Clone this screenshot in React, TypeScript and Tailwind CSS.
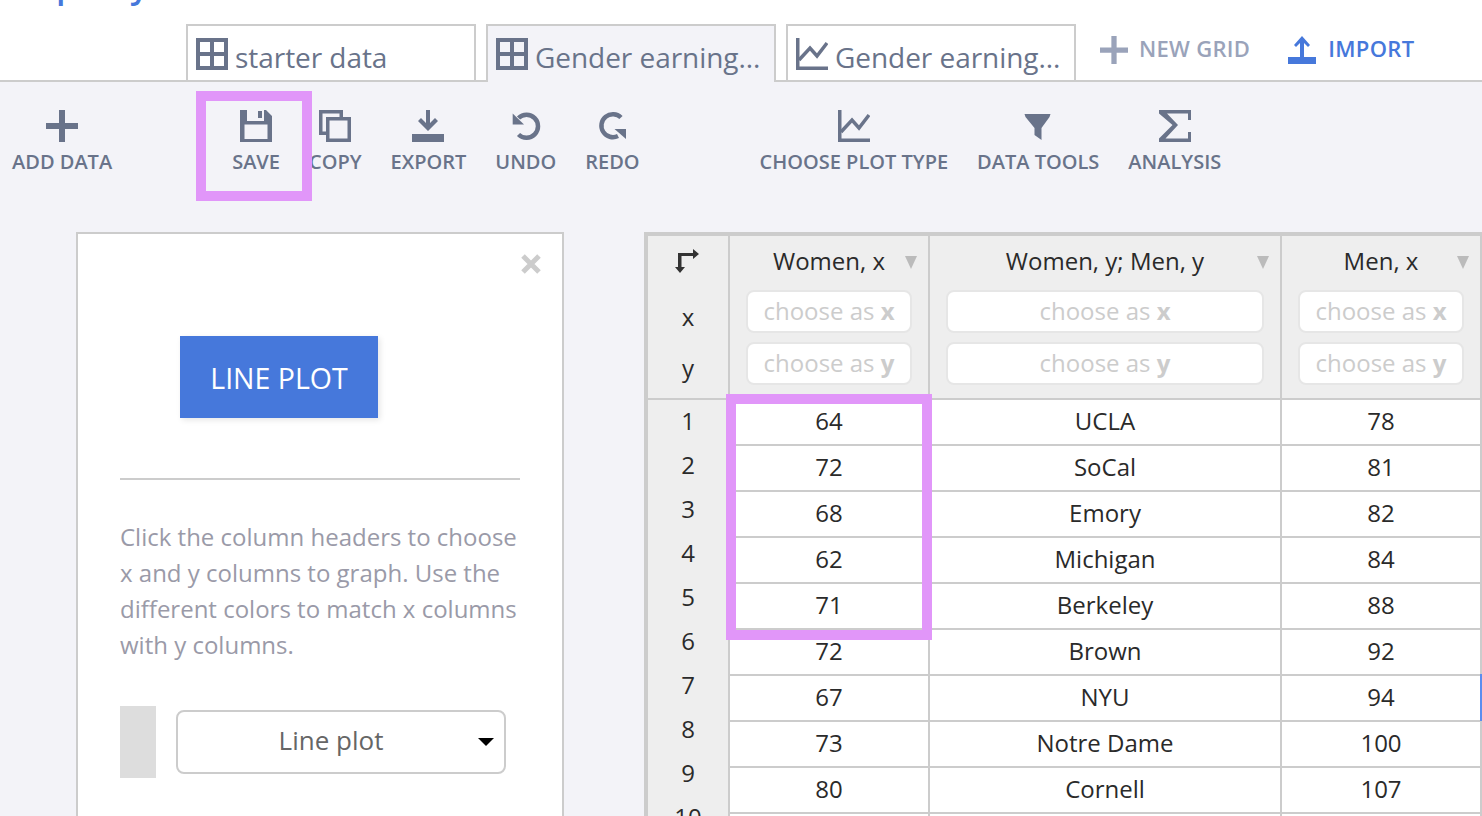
const TEXT = "text-[#69738a]";

function Grid({ c = "#69738a" }: { c?: string }) {
  return (
    <svg width="32" height="32" viewBox="0 0 32 32" className="shrink-0">
      <path fill={c} fillRule="evenodd" d="M0 0h32v32H0zM4 4v10h10V4zm14 0v10h10V4zM4 18v10h10V18zm14 0v10h10V18z" />
    </svg>
  );
}
function LineIcon({ c = "#69738a" }: { c?: string }) {
  return (
    <svg width="32" height="32" viewBox="0 0 32 32" className="shrink-0">
      <path fill={c} d="M0 0h3.500v28.500h28.500v3.500H0z" />
      <path fill="none" stroke={c} strokeWidth="3.500" d="M3 22l11-12 7 8L31 5" />
    </svg>
  );
}
function Plus({ c, s = 32 }: { c: string; s?: number }) {
  return (
    <svg width={s} height={s} viewBox="0 0 32 32"><path fill={c} d="M13 0h6v13h13v6H19v13h-6V19H0v-6h13z" /></svg>
  );
}
function Save() {
  return (
    <svg width="32" height="32" viewBox="0 0 32 32">
      <path fill="#69738a" fillRule="evenodd" d="M0 0h26l6 6v26H0zM7 0v11h17V0zM4.500 14.500V29h23V14.500z" />
      <path fill="#69738a" d="M18 1h4v7h-4z" />
    </svg>
  );
}
function Copy() {
  return (
    <svg width="32" height="32" viewBox="0 0 32 32">
      <path fill="#69738a" fillRule="evenodd" d="M0 0h24v7h8v25H7v-7H0zM3.500 3.500v18h3.500V7h13.500V3.500zM10.500 10.500v18h18v-18z" />
    </svg>
  );
}
function Export() {
  return (
    <svg width="32" height="32" viewBox="0 0 32 32">
      <path fill="#69738a" d="M14 0h4v13l5-5 3 3-10 10L6 11l3-3 5 5zM0 24h32v8H0z" />
    </svg>
  );
}
function Undo() {
  return (
    <svg width="32" height="32" viewBox="0 0 32 32">
      <path fill="none" stroke="#69738a" strokeWidth="4.500" d="M8.500 8A11.500 11.500 0 1 1 8.500 24.500" />
      <path fill="#69738a" d="M2.700 3.500V14.500H14z" />
    </svg>
  );
}
function Redo() {
  return (
    <svg width="32" height="32" viewBox="0 0 32 32">
      <path fill="none" stroke="#69738a" strokeWidth="4.500" d="M25 7.500A11.500 11.500 0 1 0 22 26" />
      <path fill="#69738a" d="M18.500 19H30V29z" />
    </svg>
  );
}
function Funnel() {
  return (
    <svg width="32" height="32" viewBox="0 0 32 32">
      <path fill="#69738a" d="M2.500 4h26l-1 3-8 11v12l-7-5v-7L3.500 7z" />
    </svg>
  );
}
function Sigma() {
  return (
    <svg width="32" height="32" viewBox="0 0 32 32">
      <path fill="#69738a" d="M0 0h32v10h-3V3.500H8L19 15 6.500 28.500H29V22h3v10H0v-3.500L13.500 15 0 3.500z" />
    </svg>
  );
}
function Upload() {
  return (
    <svg width="28" height="28" viewBox="0 0 28 28">
      <path fill="#4678db" d="M14 0l8 9-2 2-4-4v14h-4V7l-4 4-2-2zM0 21h28v7H0z" />
    </svg>
  );
}
function Corner() {
  return (
    <svg width="24" height="24" viewBox="0 0 24 24">
      <path fill="#333" d="M3 4h15V0l6 5-6 5V7H6.500v11H10l-5 6-5-6h3z" />
    </svg>
  );
}

function Tab({ label, icon, active }: { label: string; icon: React.ReactNode; active?: boolean }) {
  return (
    <div
      className={`flex w-[290px] items-center gap-[7px] overflow-hidden whitespace-nowrap border-2 border-b-0 border-[#ccc] pl-[8px] text-[28px] tracking-[-0.05px] ${TEXT} ${
        active ? "-mb-[2px] h-[58px] bg-[#f3f3f8]" : "h-[56px] bg-white pt-[2px]"
      }`}
    >
      {icon}
      <span className="mt-[6px]">{label}</span>
    </div>
  );
}

function Tool({ icon, label }: { icon: React.ReactNode; label: string }) {
  return (
    <div className="flex flex-col items-center">
      <div className="flex h-[32px] items-center justify-center">{icon}</div>
      <div className={`mt-[4px] whitespace-nowrap text-[20px] font-semibold leading-[32px] ${TEXT}`}>{label}</div>
    </div>
  );
}

function Choose({ axis }: { axis: string }) {
  return (
    <div className="flex h-[43px] items-center justify-center rounded-[8px] border-2 border-[#e6e6e6] bg-white pb-[2px] text-[24px] text-[#ccc]">
      <span>choose as <b className="font-bold">{axis}</b></span>
    </div>
  );
}

function DataCol({ title, w, values }: { title: string; w: string; values: string[] }) {
  return (
    <div className={`shrink-0 ${w} border-r-2 border-[#ccc]`}>
      <div className="relative box-content h-[162px] border-b-2 border-[#ccc] bg-[#eee]">
        <div className="flex h-[50px] items-center justify-center text-[24px] text-[#2a2a2a]">
          <span>{title}</span>
        </div>
        <svg width="12" height="13" viewBox="0 0 12 13" className="absolute right-[11px] top-[20px]">
          <path fill="#bbb" d="M0 0h12L6 13z" />
        </svg>
        <div className="flex flex-col gap-[9px] px-[16px] pt-[4px]">
          <Choose axis="x" />
          <Choose axis="y" />
        </div>
      </div>
      <div className="bg-white">
        {values.map((v) => (
          <div key={v} className="flex h-[46px] items-center justify-center border-b-2 border-[#ccc] pb-[3px] text-[24px] text-[#2a2a2a]">
            {v}
          </div>
        ))}
      </div>
    </div>
  );
}

export default function App() {
  const rows = ["1", "2", "3", "4", "5", "6", "7", "8", "9", "10"];
  return (
    <div
      className="relative h-[816px] w-[1482px] overflow-hidden bg-[#f3f3f8]"
      style={{ fontFamily: '"Open Sans", "Noto Sans", sans-serif' }}
    >
      {/* top bar */}
      <div className="relative h-[82px] border-b-2 border-[#ccc] bg-white">
        <div className="absolute left-[56px] top-[-35px] text-[34px] font-semibold leading-[40px] text-[#4678db]">plotly</div>
        <div className="flex h-[80px] items-end gap-[10px] pl-[186px]">
          <Tab label="starter data" icon={<Grid />} />
          <Tab label="Gender earning..." icon={<Grid />} active />
          <Tab label="Gender earning..." icon={<LineIcon />} />
          <div className="ml-[14px] flex h-[56px] items-start gap-[38px] pt-[10px] text-[22px] font-semibold leading-[28px] tracking-[0.3px]">
            <div className="flex items-center gap-[11px] text-[#9aa3ba]">
              <Plus c="#9aa3ba" s={28} />
              <span className="pb-[4px]">NEW GRID</span>
            </div>
            <div className="flex items-center gap-[12px] text-[#4678db]">
              <Upload />
              <span className="pb-[4px]">IMPORT</span>
            </div>
          </div>
        </div>
      </div>

      {/* toolbar */}
      <div className="flex h-[150px] items-start pl-[12px] pt-[28px]">
        <Tool icon={<Plus c="#69738a" />} label="ADD DATA" />
        <div className="ml-[120px] flex gap-[29px]">
          <Tool icon={<Save />} label="SAVE" />
          <Tool icon={<Copy />} label="COPY" />
          <Tool icon={<Export />} label="EXPORT" />
          <Tool icon={<Undo />} label="UNDO" />
          <Tool icon={<Redo />} label="REDO" />
        </div>
        <div className="ml-[120px] flex gap-[29px]">
          <Tool icon={<LineIcon />} label="CHOOSE PLOT TYPE" />
          <Tool icon={<Funnel />} label="DATA TOOLS" />
          <Tool icon={<Sigma />} label="ANALYSIS" />
        </div>
      </div>

      {/* main */}
      <div className="flex items-start">
        <div className="ml-[76px] h-[700px] w-[488px] shrink-0 border-2 border-[#ccc] bg-white">
          <div className="flex h-[56px] justify-end pr-[21px] pt-[20px]">
            <svg width="20" height="20" viewBox="0 0 20 20">
              <path stroke="#ccc" strokeWidth="5" d="M2 2l16 16M18 2L2 18" />
            </svg>
          </div>
          <div className="ml-[102px] mt-[46px] flex h-[82px] w-[198px] items-center justify-center bg-[#4678db] pt-[2px] text-[28.500px] text-white shadow-[2px_2px_6px_rgba(0,0,0,0.1)]">
            LINE PLOT
          </div>
          <div className="mx-[42px] mt-[60px] h-[2px] bg-[#ccc]" />
          <p className="mx-[42px] mt-[39px] text-[24px] leading-[36px] text-[#9a9aa8]">
            Click the column headers to choose x and y columns to graph. Use the different colors to match x columns with y columns.
          </p>
          <div className="mx-[42px] mt-[43px] flex items-center gap-[20px]">
            <div className="h-[72px] w-[36px] bg-[#ddd]" />
            <div className="relative flex h-[64px] w-[330px] items-center justify-center rounded-[8px] border-2 border-[#ccc] pb-[4px] pr-[20px] text-[26px] text-[#666]">
              Line plot
              <svg width="16" height="8" viewBox="0 0 16 8" className="absolute right-[10px] top-[26px]">
                <path d="M0 0h16L8 8z" />
              </svg>
            </div>
          </div>
        </div>

        <div className="ml-[80px] flex border-l-4 border-t-[4px] border-[#ccc]">
          <div className="h-[600px] w-[82px] shrink-0 border-r-2 border-[#ccc] bg-[#eee] text-[24px] text-[#2a2a2a]">
            <div className="flex h-[52px] items-center justify-center pb-[2px] pr-[2px]">
              <Corner />
            </div>
            <div className="flex h-[52px] items-center justify-center pt-[6px]">x</div>
            <div className="flex h-[52px] items-center justify-center pt-[4px]">y</div>
            <div className="h-[8px] border-b-2 border-[#ccc]" />
            <div className="-mt-[1px]">
              {rows.map((r) => (
                <div key={r} className="flex h-[44px] items-center justify-center">{r}</div>
              ))}
            </div>
          </div>
          <DataCol title="Women, x" w="w-[200px]" values={["64", "72", "68", "62", "71", "72", "67", "73", "80", "81"]} />
          <DataCol title="Women, y; Men, y" w="w-[352px]" values={["UCLA", "SoCal", "Emory", "Michigan", "Berkeley", "Brown", "NYU", "Notre Dame", "Cornell", "Yale"]} />
          <DataCol title="Men, x" w="w-[200px]" values={["78", "81", "82", "84", "88", "92", "94", "100", "107", "110"]} />
        </div>
      </div>

      {/* overlays */}
      <div className="absolute left-[1480px] top-[674px] h-[47px] w-[2px] bg-[#5b8def]" />
      <div className="absolute left-[196px] top-[91px] h-[110px] w-[116px] border-[10px] border-[#e196f9]" />
      <div className="absolute left-[726px] top-[394px] h-[246px] w-[206px] border-[10px] border-[#e196f9]" />
    </div>
  );
}
